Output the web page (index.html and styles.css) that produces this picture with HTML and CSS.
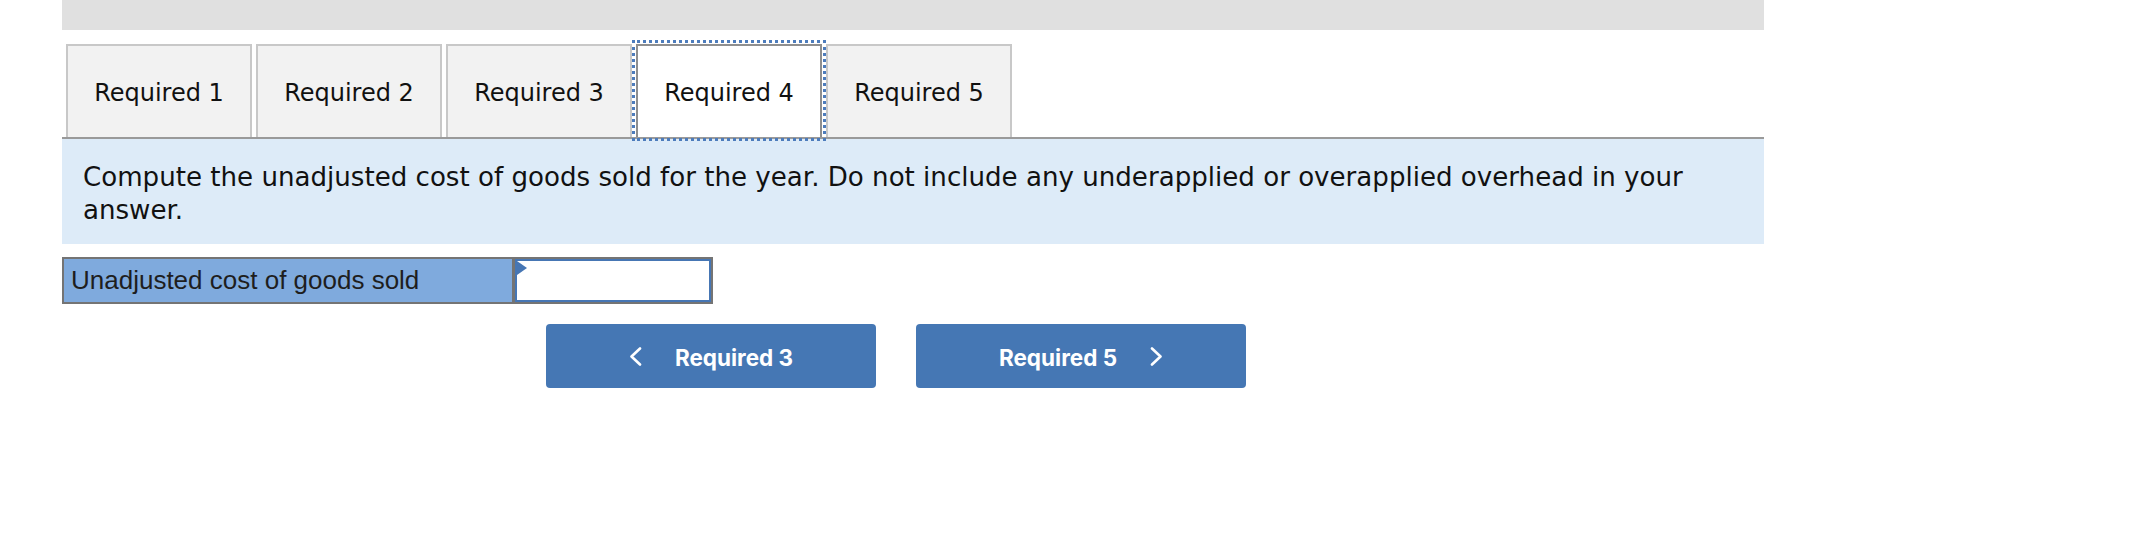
FILE: index.html
```html
<!DOCTYPE html>
<html lang="en">
<head>
<meta charset="utf-8">
<title>Required 4</title>
<link rel="stylesheet" href="styles.css">
</head>
<body>
<div class="page">
  <div class="topbar"></div>
  <div class="tabs">
    <div class="tab">Required 1</div>
    <div class="tab">Required 2</div>
    <div class="tab">Required 3</div>
    <div class="tab active">Required 4</div>
    <div class="tab">Required 5</div>
  </div>
  <div class="prompt">Compute the unadjusted cost of goods sold for the year. Do not include any underapplied or overapplied overhead in your answer.</div>
  <div class="answer">
    <div class="label">Unadjusted cost of goods sold</div>
    <div class="field"><span class="flag"></span></div>
  </div>
  <div class="nav">
    <div class="btn">
      <svg class="chev" width="13" height="19" viewBox="0 0 13 19"><polyline points="11,1.5 2.5,9.5 11,17.5" fill="none" stroke="#fff" stroke-width="2.6" stroke-linecap="round" stroke-linejoin="round"/></svg>
      <span>Required 3</span>
    </div>
    <div class="btn">
      <span>Required 5</span>
      <svg class="chev" width="13" height="19" viewBox="0 0 13 19"><polyline points="2,1.5 10.5,9.5 2,17.5" fill="none" stroke="#fff" stroke-width="2.6" stroke-linecap="round" stroke-linejoin="round"/></svg>
    </div>
  </div>
</div>
</body>
</html>
```
FILE: styles.css
```css
html, body {
  margin: 0;
  padding: 0;
  background: #ffffff;
}

.page {
  margin-left: 62px;
  width: 1702px;
}

.topbar {
  height: 30px;
  background: #e0e0e0;
}

.tabs {
  display: flex;
  gap: 4px;
  padding-left: 4px;
  margin-top: 14px;
  border-bottom: 2px solid #9a9a9a;
}

.tab {
  box-sizing: border-box;
  width: 186px;
  height: 93px;
  border: 2px solid #c8c8c8;
  border-bottom: none;
  background: #f2f2f2;
  display: flex;
  align-items: center;
  justify-content: center;
  padding-top: 2px;
  font-family: "DejaVu Sans", Verdana, sans-serif;
  font-size: 24px;
  color: #111111;
}

.tab.active {
  background: #ffffff;
  border-color: #8f8f8f;
  outline: 3px dotted #4d7cbc;
  outline-offset: 1px;
}

.prompt {
  background: #ddebf8;
  padding: 22px 60px 18px 21px;
  font-family: "DejaVu Sans", Verdana, sans-serif;
  font-size: 26.1px;
  line-height: 32.5px;
  color: #111111;
}

.answer {
  display: flex;
  width: fit-content;
  margin-top: 13px;
  border: 2px solid #747474;
}

.label {
  box-sizing: border-box;
  width: 451px;
  height: 43px;
  padding-left: 7px;
  background: #7faadd;
  border-right: 3px solid #747474;
  display: flex;
  align-items: center;
  font-family: "Liberation Sans", Arial, sans-serif;
  font-size: 26px;
  color: #1e1e1e;
}

.field {
  position: relative;
  box-sizing: border-box;
  width: 196px;
  height: 43px;
  background: #ffffff;
  border: 2px solid #4676b4;
}

.flag {
  position: absolute;
  left: 0;
  top: 0;
  width: 0;
  height: 0;
  border-top: 7px solid transparent;
  border-bottom: 7px solid transparent;
  border-left: 10px solid #4676b4;
}

.nav {
  display: flex;
  gap: 40px;
  padding-left: 484px;
  margin-top: 20px;
}

.btn {
  box-sizing: border-box;
  width: 330px;
  height: 64px;
  border-radius: 4px;
  background: #4577b4;
  color: #ffffff;
  display: flex;
  align-items: center;
  justify-content: center;
  gap: 33px;
  padding-top: 3px;
  font-family: Inter, Roboto, "Liberation Sans", sans-serif;
  font-weight: 700;
  font-size: 22.5px;
}

.chev {
  display: block;
  margin-top: -2px;
}
```
